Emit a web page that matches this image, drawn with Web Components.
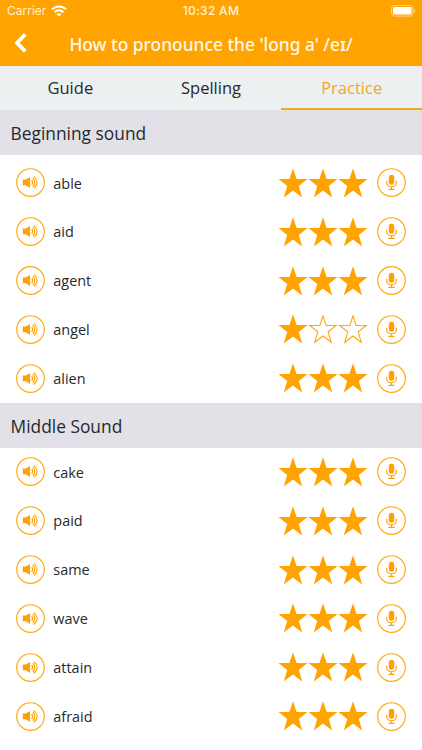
<!DOCTYPE html>
<html lang="en">
<head>
<meta charset="utf-8">
<title>Pronunciation practice</title>
<style>
body{margin:0;background:#fff;font-family:"Open Sans",sans-serif;color:#28282c;overflow:hidden}
</style>
</head>
<body>
<practice-app></practice-app>
<script>
const define=(name,css,render)=>customElements.define(name,class extends HTMLElement{
  connectedCallback(){
    if(this.shadowRoot)return;
    this.attachShadow({mode:"open"}).innerHTML=`<style>${css}</style>${render(this)}`;
  }
});

define("status-bar",`
:host{display:grid;grid-template-columns:1fr auto 1fr;align-items:center;height:22px;padding:0 6px 0 7px;box-sizing:border-box;font:12px/22px Inter,sans-serif;color:#fff3d9}
.left{display:flex;align-items:center;gap:4.5px}
.time{font-weight:500;font-size:12px;letter-spacing:.3px;margin-left:-1px}
.right{display:flex;justify-content:flex-end}
svg{display:block}`,
()=>`<div class="left"><span>Carrier</span><svg width="16" height="12" viewBox="0 0 16 12" fill="none" stroke="#fff" stroke-width="2"><path d="M1 4.4a10 10 0 0 1 14 0M3.6 7.2a6.2 6.2 0 0 1 8.8 0"/><path d="M8 11.6 5.6 9.2a3.4 3.4 0 0 1 4.8 0z" fill="#fff" stroke="none"/></svg></div>
<span class="time">10:32 AM</span>
<div class="right"><svg width="25" height="12" viewBox="0 0 25 12"><rect x=".5" y=".5" width="21.5" height="10.6" rx="2.8" fill="none" stroke="#ffd88d"/><rect x="2" y="2" width="18.5" height="7.6" rx="1.3" fill="#fff"/><path d="M23.2 4v3.6q1.2-.5 1.2-1.8T23.2 4" fill="#ffd88d"/></svg></div>`);

define("nav-bar",`
:host{display:grid;grid-template-columns:40px 1fr 40px;align-items:center;height:43.5px;color:#fff8ea}
svg{display:block;margin:-2px 0 0 14px}
h1{margin:0;text-align:center;white-space:nowrap;font:500 17.35px/24px "Noto Sans",sans-serif}`,
()=>`<svg width="14" height="20" viewBox="0 0 14 20"><path d="M11.3 1.4 3 9.9l8.3 8.5" fill="none" stroke="#fff" stroke-width="3.7"/></svg><h1><slot></slot></h1>`);

define("tab-item",`
:host{display:flex;flex:1;align-items:center;justify-content:center;box-sizing:border-box;padding-top:2px;font-size:16.5px;border-bottom:2px solid transparent}
:host([active]){color:#f5a524;border-bottom-color:#f5a524}`,
()=>`<slot></slot>`);

define("tab-strip",`
:host{display:flex;height:44.8px;background:#ecf0f1}`,
()=>`<slot></slot>`);

define("section-title",`
:host{display:flex;align-items:center;height:44.8px;padding:.8px 0 0 10.6px;box-sizing:border-box;background:#e2e1e8;font-size:17.35px}`,
()=>`<slot></slot>`);

define("round-icon",`
:host{display:block;width:29px;height:29px}svg{display:block}`,
el=>`<svg width="29" height="29" viewBox="0 0 29 29"><circle cx="14.5" cy="14.5" r="13.8" fill="#fff" stroke="#ffa90f" stroke-width="1.15"/>${
el.getAttribute("kind")==="mic"
?`<rect x="11.8" y="6.8" width="5.4" height="10" rx="2.4" fill="#ffa200"/><path d="M9.7 12.8v1.7a4.8 4.3 0 0 0 9.6 0v-1.7M14.5 18.8v2.4M11.4 21.4h6.2" fill="none" stroke="#ffa200" stroke-width="1.15"/>`
:`<path d="M6.8 11.5h3L14.1 9v11l-4.3-2.7h-3z" fill="#ffa200"/><path d="M15.6 12.2q2.2 2.3 0 4.6M16.7 10.2q4.3 4.3 0 8.6M17.8 8.3q6.8 6.2 0 12.4" fill="none" stroke="#ffa200" stroke-width="1.15"/>`}</svg>`);

define("star-rating",`
:host{display:flex}svg{display:block}
path{fill:#fff;stroke:#ffa70d;stroke-width:1.1}
.on path{fill:#ffa300;stroke:none}`,
el=>[0,1,2].map(i=>{const on=i<+el.getAttribute("value");
return `<svg class="${on?"on":""}" width="30" height="30" viewBox="0 0 30 30"><path d="${on
?"M15 .2 18.6 11H29.5L20.8 17.9 24.2 29.4 15 22.6 5.8 29.4 9.2 17.9 .5 11H11.4Z"
:"M15 1.9 18.2 11.5H28.2L20.2 17.7 23.2 28.2 15 22 6.8 28.2 9.8 17.7 1.8 11.5H11.8Z"}"/></svg>`}).join(""));

define("word-row",`
:host{display:flex;align-items:center;height:48.85px;padding:0 16.3px;box-sizing:border-box;font-size:14.45px}
.word{flex:1;padding:.3px 0 0 8px}
star-rating{margin-right:9px}`,
el=>`<round-icon kind="speaker"></round-icon><span class="word"><slot></slot></span><star-rating value="${el.getAttribute("stars")}"></star-rating><round-icon kind="mic"></round-icon>`);

const rows=list=>list.map(([word,stars=3])=>`<word-row stars="${stars}">${word}</word-row>`).join("");
define("practice-app",`
:host{display:block;width:422px;height:750px;overflow:hidden}
header{background:#ffa300}
.first{padding-top:3.4px}`,
()=>`<header><status-bar></status-bar><nav-bar>How to pronounce the 'long a' /e<b>ɪ</b>/</nav-bar></header>
<tab-strip><tab-item>Guide</tab-item><tab-item>Spelling</tab-item><tab-item active>Practice</tab-item></tab-strip>
<section-title>Beginning sound</section-title>
<div class="first">${rows([["able"],["aid"],["agent"],["angel",1],["alien"]])}</div>
<section-title>Middle Sound</section-title>
<div>${rows([["cake"],["paid"],["same"],["wave"],["attain"],["afraid"]])}</div>`);
</script>
</body>
</html>
